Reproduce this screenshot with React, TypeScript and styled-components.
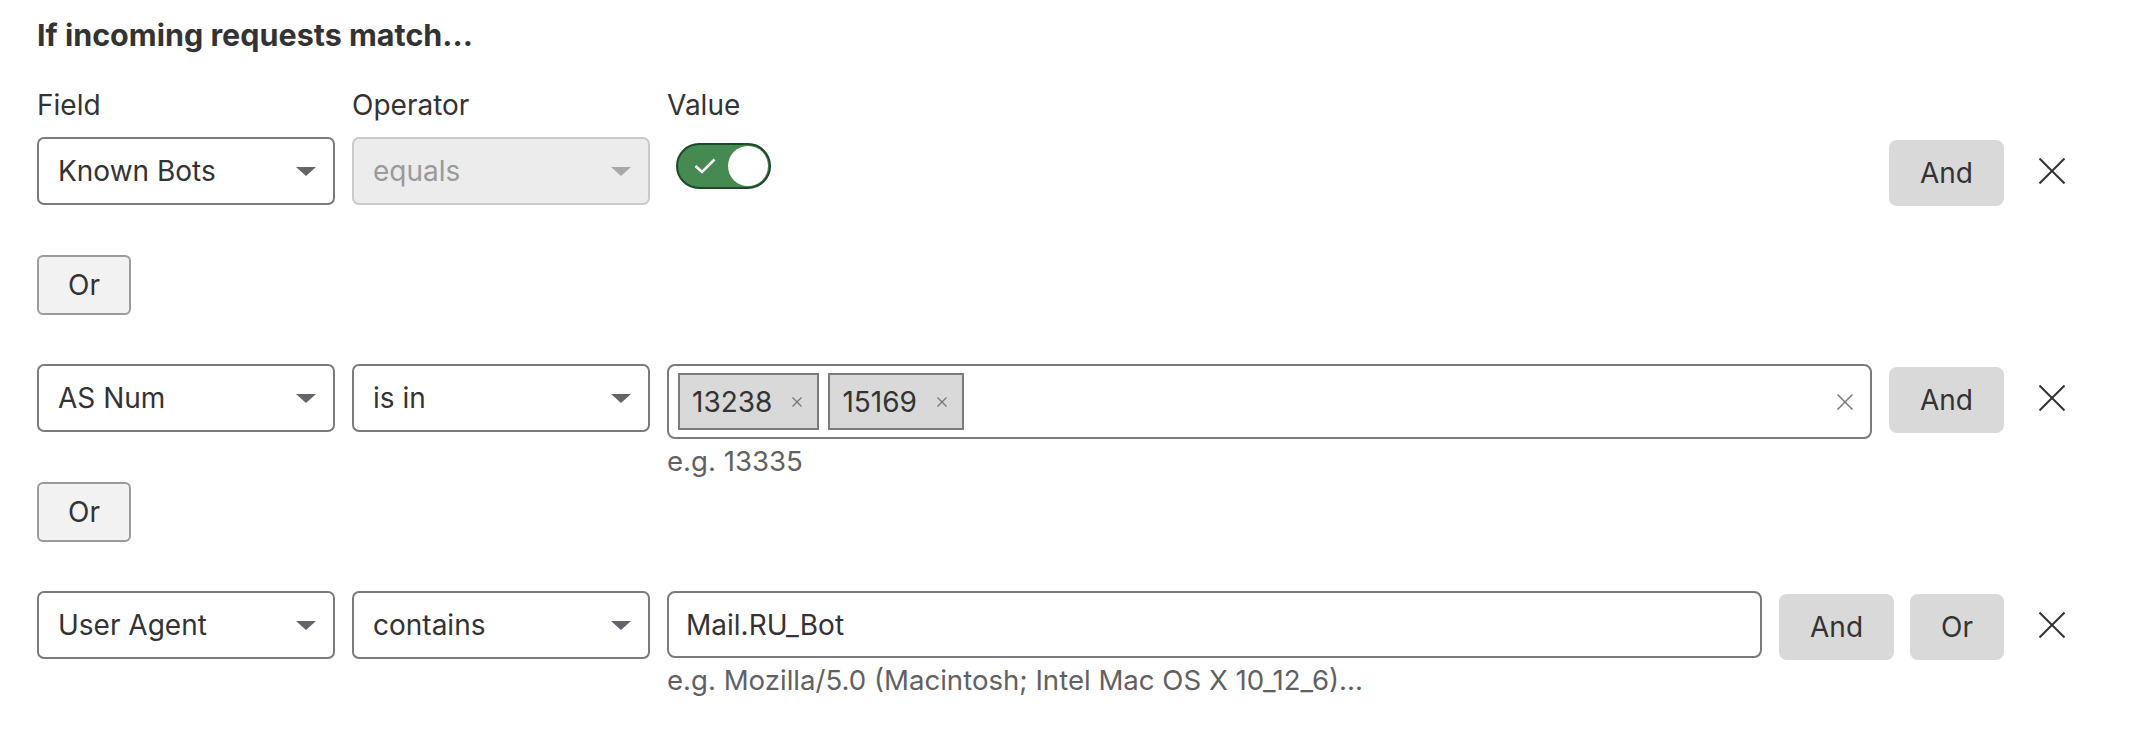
import styled, { createGlobalStyle } from "styled-components";

const GlobalStyle = createGlobalStyle`
  body {
    margin: 0;
    background: #fff;
    color: #333;
    font-family: Inter, "Noto Sans", sans-serif;
  }
`;

const Wrapper = styled.div`
  padding: 15px 62px 40px 37px;
`;

const Title = styled.h2`
  margin: 0 0 33px;
  font-size: 30.5px;
  font-weight: 700;
  line-height: 40px;
  color: #333;
`;

const LabelRow = styled.div`
  display: flex;
  gap: 17px;
  margin-bottom: 15px;
`;

const Label = styled.div<{ $width?: number }>`
  width: ${(p) => (p.$width ? `${p.$width}px` : "auto")};
  flex: none;
  font-size: 28px;
  line-height: 34px;
  color: #333;
`;

const ConditionBlock = styled.div`
  min-height: 118px;
`;

const Row = styled.div`
  display: flex;
  align-items: flex-start;
  gap: 17px;
`;

const Select = styled.div<{ $disabled?: boolean }>`
  width: 298px;
  height: 68px;
  flex: none;
  box-sizing: border-box;
  display: flex;
  align-items: center;
  justify-content: space-between;
  padding: 0 17px 0 19px;
  border: 2px solid ${(p) => (p.$disabled ? "#cacaca" : "#7b7b7b")};
  border-radius: 7px;
  background: ${(p) => (p.$disabled ? "#ececec" : "#fff")};
  color: ${(p) => (p.$disabled ? "#9a9a9a" : "#333")};
  font-size: 28px;
`;

const Caret = styled.span<{ $disabled?: boolean }>`
  width: 0;
  height: 0;
  border-left: 10px solid transparent;
  border-right: 10px solid transparent;
  border-top: 9px solid ${(p) => (p.$disabled ? "#a8a8a8" : "#626569")};
`;

const ValueCol = styled.div`
  flex: 1;
  min-width: 0;
  display: flex;
  flex-direction: column;
`;

const Toggle = styled.div`
  width: 95px;
  height: 46px;
  margin: 6px 0 0 9px;
  box-sizing: border-box;
  display: flex;
  align-items: center;
  justify-content: space-between;
  padding: 0 1px 0 16px;
  border: 2px solid #1d4926;
  border-radius: 23px;
  background: #458a50;
`;

const Knob = styled.span`
  width: 40px;
  height: 40px;
  border-radius: 50%;
  background: #fff;
`;

const MultiBox = styled.div`
  height: 75px;
  box-sizing: border-box;
  display: flex;
  align-items: center;
  gap: 9px;
  padding: 0 17px 0 9px;
  border: 2px solid #7b7b7b;
  border-radius: 8px;
`;

const Chip = styled.div`
  height: 57px;
  box-sizing: border-box;
  display: flex;
  align-items: center;
  gap: 20px;
  padding: 0 15px 0 12px;
  border: 2px solid #7b7b7b;
  background: #d9d9d9;
  font-size: 28px;
  color: #333;
`;

const ClearButton = styled.span`
  margin-left: auto;
  display: flex;
`;

const TextInput = styled.input`
  height: 67px;
  box-sizing: border-box;
  padding: 0 17px;
  border: 2px solid #7b7b7b;
  border-radius: 8px;
  font-family: inherit;
  font-size: 28px;
  color: #333;
  outline: none;
`;

const Hint = styled.div`
  margin-top: 5px;
  font-size: 27.6px;
  line-height: 34px;
  color: #616161;
`;

const ButtonGroup = styled.div`
  display: flex;
  gap: 16px;
  margin-top: 3px;
`;

const ActionButton = styled.button`
  height: 66px;
  padding: 0 31px;
  border: none;
  border-radius: 8px;
  background: #d9d9d9;
  font-family: inherit;
  font-size: 28px;
  color: #333;
`;

const RemoveButton = styled.button`
  width: 61px;
  height: 68px;
  flex: none;
  display: flex;
  align-items: center;
  justify-content: center;
  padding: 0;
  border: none;
  background: none;
`;

const OrButton = styled.button`
  width: 94px;
  height: 60px;
  margin-bottom: 49px;
  display: block;
  border: 2px solid #9b9b9b;
  border-radius: 6px;
  background: #f2f2f2;
  font-family: inherit;
  font-size: 28px;
  color: #333;
`;

function Cross({ size, stroke, width }: { size: number; stroke: string; width: number }) {
  return (
    <svg width={size} height={size} viewBox={`0 0 ${size} ${size}`}>
      <line x1="0.5" y1="0.5" x2={size - 0.5} y2={size - 0.5} stroke={stroke} strokeWidth={width} />
      <line x1={size - 0.5} y1="0.5" x2="0.5" y2={size - 0.5} stroke={stroke} strokeWidth={width} />
    </svg>
  );
}

function FieldSelect({ value, disabled }: { value: string; disabled?: boolean }) {
  return (
    <Select $disabled={disabled}>
      <span>{value}</span>
      <Caret $disabled={disabled} />
    </Select>
  );
}

function Actions({ buttons }: { buttons: string[] }) {
  return (
    <>
      <ButtonGroup>
        {buttons.map((b) => (
          <ActionButton key={b}>{b}</ActionButton>
        ))}
      </ButtonGroup>
      <RemoveButton aria-label="Remove">
        <Cross size={26} stroke="#333" width={2} />
      </RemoveButton>
    </>
  );
}

export default function App() {
  return (
    <Wrapper>
      <GlobalStyle />
      <Title>If incoming requests match...</Title>
      <LabelRow>
        <Label $width={298}>Field</Label>
        <Label $width={298}>Operator</Label>
        <Label>Value</Label>
      </LabelRow>

      <ConditionBlock>
        <Row>
          <FieldSelect value="Known Bots" />
          <FieldSelect value="equals" disabled />
          <ValueCol>
            <Toggle>
              <svg width="22" height="16" viewBox="0 0 22 16">
                <polyline points="1.5,8 8,14 20.5,1.5" fill="none" stroke="#fff" strokeWidth="2.5" />
              </svg>
              <Knob />
            </Toggle>
          </ValueCol>
          <Actions buttons={["And"]} />
        </Row>
      </ConditionBlock>
      <OrButton>Or</OrButton>

      <ConditionBlock>
        <Row>
          <FieldSelect value="AS Num" />
          <FieldSelect value="is in" />
          <ValueCol>
            <MultiBox>
              {["13238", "15169"].map((n) => (
                <Chip key={n}>
                  {n}
                  <Cross size={10} stroke="#777" width={1.2} />
                </Chip>
              ))}
              <ClearButton>
                <Cross size={16} stroke="#777" width={1.5} />
              </ClearButton>
            </MultiBox>
            <Hint>e.g. 13335</Hint>
          </ValueCol>
          <Actions buttons={["And"]} />
        </Row>
      </ConditionBlock>
      <OrButton>Or</OrButton>

      <ConditionBlock>
        <Row>
          <FieldSelect value="User Agent" />
          <FieldSelect value="contains" />
          <ValueCol>
            <TextInput readOnly defaultValue="Mail.RU_Bot" />
            <Hint>e.g. Mozilla/5.0 (Macintosh; Intel Mac OS X 10_12_6)...</Hint>
          </ValueCol>
          <Actions buttons={["And", "Or"]} />
        </Row>
      </ConditionBlock>
    </Wrapper>
  );
}
